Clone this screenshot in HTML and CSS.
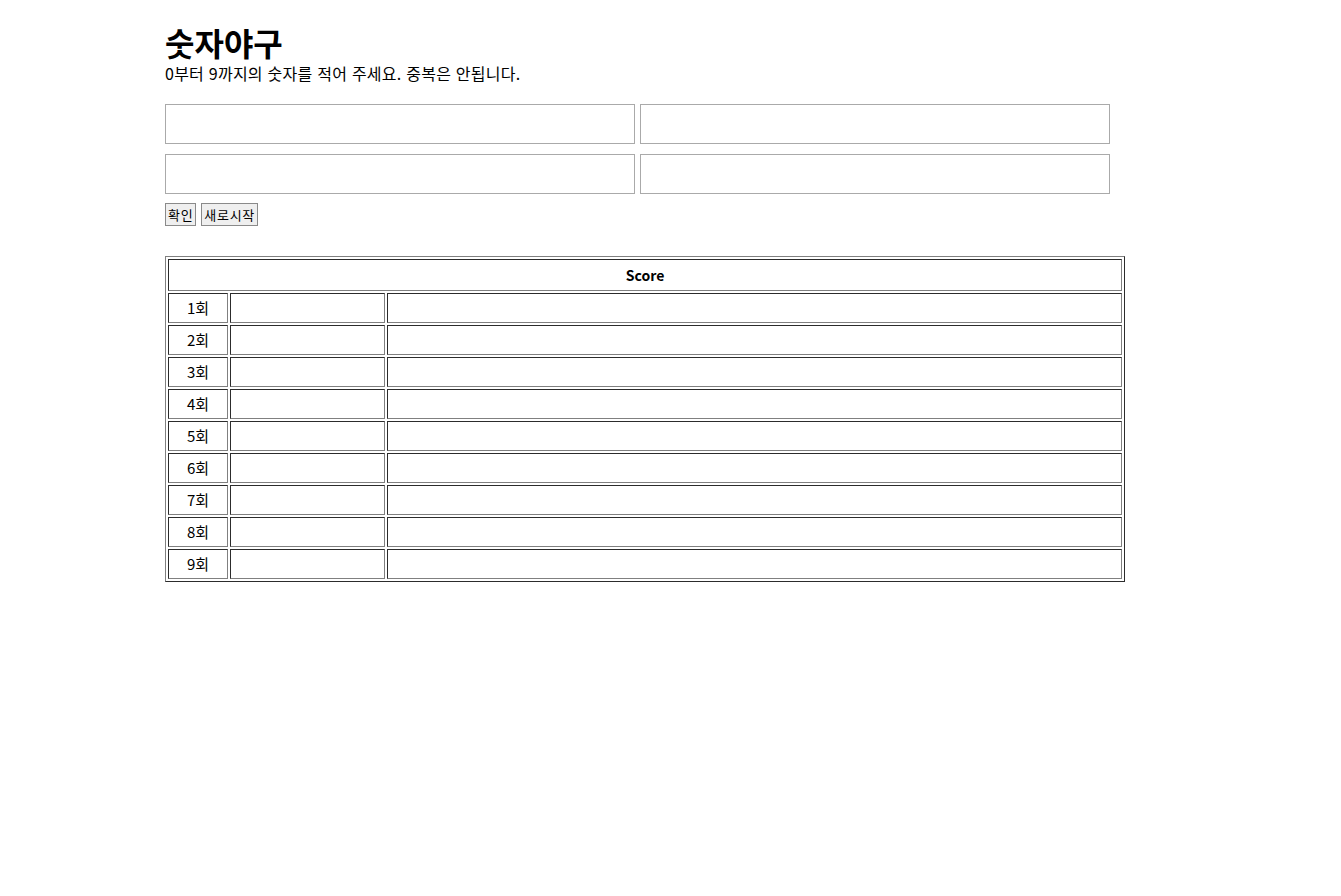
FILE: index.html
```html
<!DOCTYPE html>
<html lang="ko">
<head>
<meta charset="utf-8">
<title>숫자야구</title>
<link rel="stylesheet" href="styles.css">
</head>
<body>
<div class="wrap">
  <h1 class="title">숫자야구</h1>
  <p class="desc">0부터 9까지의 숫자를 적어 주세요. 중복은 안됩니다.</p>
  <div class="inputs">
    <div class="row"><input class="num" type="text"><input class="num" type="text"></div>
    <div class="row"><input class="num" type="text"><input class="num" type="text"></div>
  </div>
  <div class="buttons">
    <button class="btn" type="button">확인</button>
    <button class="btn" type="button">새로시작</button>
  </div>
  <table class="score">
    <colgroup>
      <col class="c1">
      <col class="c2">
      <col class="c3">
    </colgroup>
    <thead>
      <tr><th colspan="3">Score</th></tr>
    </thead>
    <tbody>
      <tr><td>1회</td><td></td><td></td></tr>
      <tr><td>2회</td><td></td><td></td></tr>
      <tr><td>3회</td><td></td><td></td></tr>
      <tr><td>4회</td><td></td><td></td></tr>
      <tr><td>5회</td><td></td><td></td></tr>
      <tr><td>6회</td><td></td><td></td></tr>
      <tr><td>7회</td><td></td><td></td></tr>
      <tr><td>8회</td><td></td><td></td></tr>
      <tr><td>9회</td><td></td><td></td></tr>
    </tbody>
  </table>
</div>
</body>
</html>
```
FILE: styles.css
```css
html, body {
  margin: 0;
  padding: 0;
  background: #fff;
}
body {
  font-family: "Noto Sans CJK KR", "Noto Sans", sans-serif;
  color: #000;
  font-size: 14px;
}
.wrap {
  width: 960px;
  padding: 20px 0 0 165px;
}
.title {
  margin: 0;
  font-size: 32px;
  line-height: 44px;
  font-weight: 700;
  height: 44px;
  display: flex;
  align-items: center;
}
.desc {
  margin: 0;
  font-size: 16px;
  line-height: 20px;
  height: 20px;
  margin-top: -1px;
  letter-spacing: 0.25px;
}
.inputs {
  margin-top: 21px;
  display: flex;
  flex-direction: column;
  gap: 10px;
}
.row {
  display: flex;
  gap: 5px;
}
.num {
  box-sizing: border-box;
  width: 470px;
  height: 40px;
  margin: 0;
  border: 1px solid #aaa;
  background: #fff;
  padding: 0 4px;
  font: inherit;
}
.buttons {
  margin-top: 9px;
  display: flex;
  gap: 5px;
}
.btn {
  box-sizing: border-box;
  height: 23px;
  margin: 0;
  padding: 0 2px;
  border: 1px solid #8a8a8a;
  border-radius: 0;
  background: #efefef;
  font-family: "Noto Sans CJK KR", sans-serif;
  font-size: 13px;
  letter-spacing: 0.7px;
  line-height: 19px;
  color: #000;
}
.score {
  margin-top: 30px;
  width: 960px;
  border: 1px outset #808080;
  border-spacing: 2px;
  table-layout: fixed;
}
.score th {
  border: 1px inset #808080;
  padding: 1px;
  height: 28px;
  font-size: 14px;
  font-weight: 700;
  text-align: center;
  line-height: 20px;
}
.score td {
  border: 1px inset #808080;
  padding: 1px;
  height: 26px;
  line-height: 20px;
  text-align: center;
  font-size: 15px;
}
.c1 { width: 60px; }
.c2 { width: 155px; }
```
